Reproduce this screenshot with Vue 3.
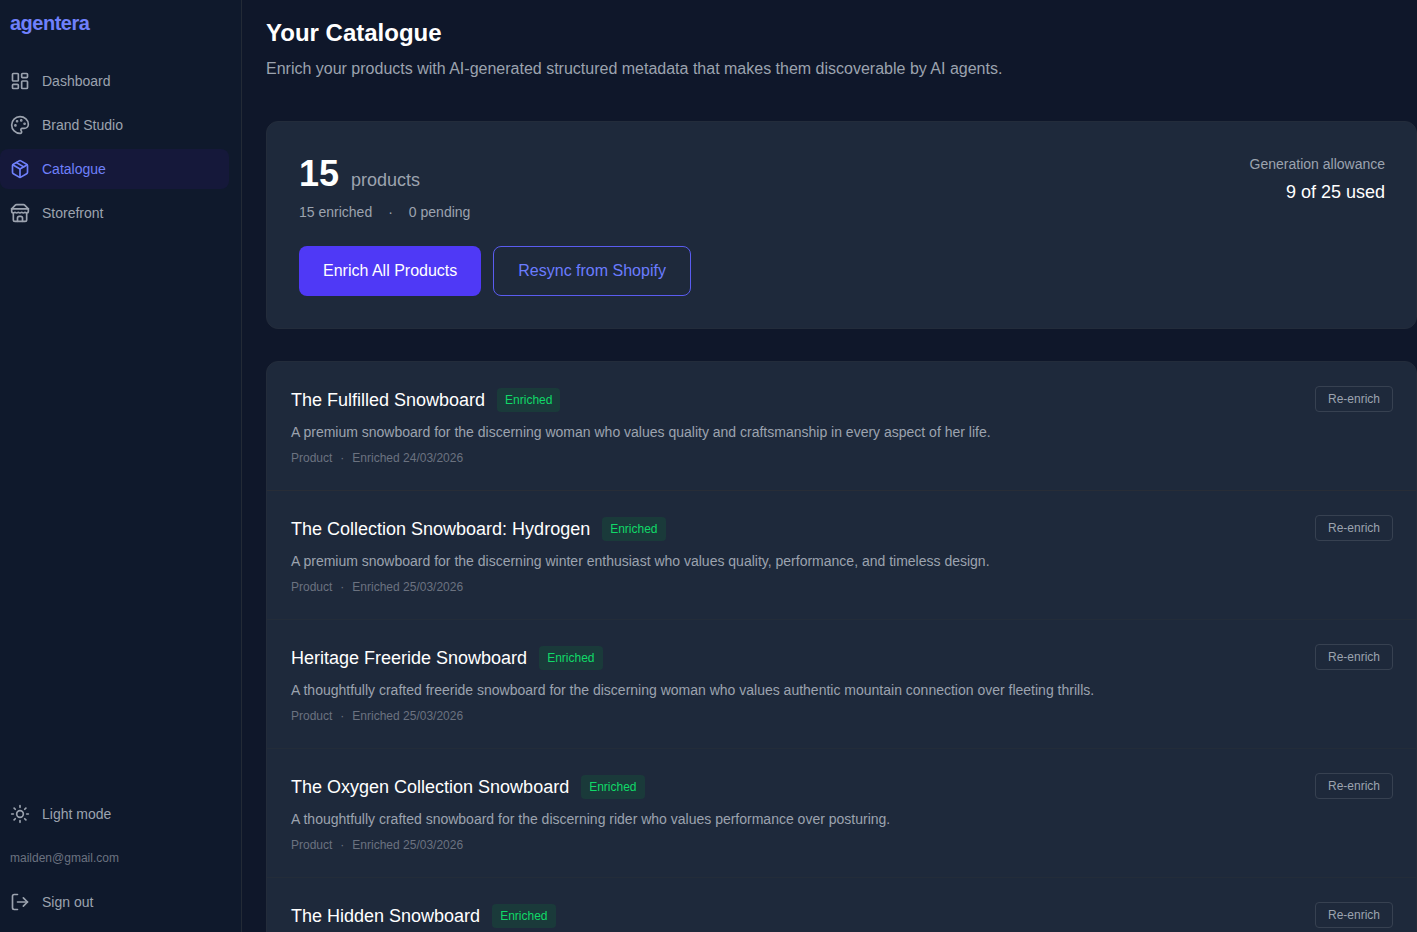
<template>
  <div class="app">
    <aside class="sidebar">
      <div class="logo">agentera</div>
      <nav class="nav">
        <a v-for="item in navItems" :key="item.label" class="nav-item" :class="{ 'nav-item--active': item.active }">
          <svg class="nav-icon" viewBox="0 0 24 24" v-html="item.icon" />
          <span>{{ item.label }}</span>
        </a>
      </nav>
      <div class="sidebar-foot">
        <a class="nav-item">
          <svg class="nav-icon" viewBox="0 0 24 24" v-html="sunIcon" />
          <span>Light mode</span>
        </a>
        <div class="email">mailden@gmail.com</div>
        <a class="nav-item">
          <svg class="nav-icon" viewBox="0 0 24 24" v-html="signOutIcon" />
          <span>Sign out</span>
        </a>
      </div>
    </aside>

    <main class="main">
      <h1 class="page-title">Your Catalogue</h1>
      <p class="page-sub">Enrich your products with AI-generated structured metadata that makes them discoverable by AI agents.</p>

      <section class="summary">
        <div class="summary-left">
          <div class="count-row">
            <span class="count">15</span>
            <span class="count-label">products</span>
          </div>
          <div class="count-meta">
            <span>15 enriched</span>
            <span class="count-dot">·</span>
            <span>0 pending</span>
          </div>
          <div class="actions">
            <button class="btn btn--primary">Enrich All Products</button>
            <button class="btn btn--outline">Resync from Shopify</button>
          </div>
        </div>
        <div class="allowance">
          <div class="allowance-label">Generation allowance</div>
          <div class="allowance-val">9 of 25 used</div>
        </div>
      </section>

      <section class="products">
        <article v-for="p in products" :key="p.name" class="product">
          <div class="product-body">
            <div class="product-head">
              <h3 class="product-name">{{ p.name }}</h3>
              <span class="badge">Enriched</span>
            </div>
            <p class="product-desc">{{ p.desc }}</p>
            <div class="product-meta">
              <span>Product</span>
              <span>·</span>
              <span>Enriched {{ p.date }}</span>
            </div>
          </div>
          <button class="re-btn">Re-enrich</button>
        </article>
      </section>
    </main>
  </div>
</template>

<script setup>
const navItems = [
  {
    label: 'Dashboard',
    icon: '<rect x="3" y="3" width="7" height="9" rx="1"/><rect x="14" y="3" width="7" height="5" rx="1"/><rect x="14" y="12" width="7" height="9" rx="1"/><rect x="3" y="16" width="7" height="5" rx="1"/>',
  },
  {
    label: 'Brand Studio',
    icon: '<path d="M12 22a1 1 0 0 1 0-20 10 9 0 0 1 10 9 5 5 0 0 1-5 5h-2.25a1.75 1.75 0 0 0-1.4 2.8l.3.4a1.75 1.75 0 0 1-1.4 2.8z"/><circle cx="13.5" cy="6.5" r=".6" fill="currentColor"/><circle cx="17.5" cy="10.5" r=".6" fill="currentColor"/><circle cx="6.5" cy="12.5" r=".6" fill="currentColor"/><circle cx="8.5" cy="7.5" r=".6" fill="currentColor"/>',
  },
  {
    label: 'Catalogue',
    active: true,
    icon: '<path d="M11 21.73a2 2 0 0 0 2 0l7-4A2 2 0 0 0 21 16V8a2 2 0 0 0-1-1.73l-7-4a2 2 0 0 0-2 0l-7 4A2 2 0 0 0 3 8v8a2 2 0 0 0 1 1.73z"/><path d="M12 22V12"/><path d="M3.29 7 12 12l8.71-5"/><path d="m7.5 4.27 9 5.15"/>',
  },
  {
    label: 'Storefront',
    icon: '<path d="m2 7 4.41-4.41A2 2 0 0 1 7.83 2h8.34a2 2 0 0 1 1.42.59L22 7"/><path d="M4 12v8a2 2 0 0 0 2 2h12a2 2 0 0 0 2-2v-8"/><path d="M15 22v-4a2 2 0 0 0-2-2h-2a2 2 0 0 0-2 2v4"/><path d="M2 7h20"/><path d="M22 7v3a2 2 0 0 1-2 2a2.7 2.7 0 0 1-1.59-.63.7.7 0 0 0-.82 0A2.7 2.7 0 0 1 16 12a2.7 2.7 0 0 1-1.59-.63.7.7 0 0 0-.82 0A2.7 2.7 0 0 1 12 12a2.7 2.7 0 0 1-1.59-.63.7.7 0 0 0-.82 0A2.7 2.7 0 0 1 8 12a2.7 2.7 0 0 1-1.59-.63.7.7 0 0 0-.82 0A2.7 2.7 0 0 1 4 12a2 2 0 0 1-2-2V7"/>',
  },
]

const sunIcon = '<circle cx="12" cy="12" r="4"/><path d="M12 2v2"/><path d="M12 20v2"/><path d="m4.93 4.93 1.41 1.41"/><path d="m17.66 17.66 1.41 1.41"/><path d="M2 12h2"/><path d="M20 12h2"/><path d="m6.34 17.66-1.41 1.41"/><path d="m19.07 4.93-1.41 1.41"/>'
const signOutIcon = '<path d="M9 21H5a2 2 0 0 1-2-2V5a2 2 0 0 1 2-2h4"/><path d="m16 17 5-5-5-5"/><path d="M21 12H9"/>'

const products = [
  { name: 'The Fulfilled Snowboard', desc: 'A premium snowboard for the discerning woman who values quality and craftsmanship in every aspect of her life.', date: '24/03/2026' },
  { name: 'The Collection Snowboard: Hydrogen', desc: 'A premium snowboard for the discerning winter enthusiast who values quality, performance, and timeless design.', date: '25/03/2026' },
  { name: 'Heritage Freeride Snowboard', desc: 'A thoughtfully crafted freeride snowboard for the discerning woman who values authentic mountain connection over fleeting thrills.', date: '25/03/2026' },
  { name: 'The Oxygen Collection Snowboard', desc: 'A thoughtfully crafted snowboard for the discerning rider who values performance over posturing.', date: '25/03/2026' },
  { name: 'The Hidden Snowboard', desc: 'A premium snowboard for the discerning rider who values quality and timeless design.', date: '25/03/2026' },
]
</script>

<style>
html, body {
  margin: 0;
  height: 100%;
  overflow: hidden;
  background: #0f172a;
}
</style>

<style scoped>
.app {
  display: flex;
  height: 932px;
  overflow: hidden;
  font-family: "Liberation Sans", Arial, sans-serif;
  background: #0f172a;
}

.sidebar {
  width: 241px;
  flex-shrink: 0;
  border-right: 1px solid #232a36;
  display: flex;
  flex-direction: column;
  background: #0f192c;
}

.logo {
  font-size: 20px;
  font-weight: 700;
  color: #6f80fb;
  letter-spacing: -0.5px;
  padding: 12px 10px 0;
  line-height: 23px;
}

.nav {
  margin-top: 26px;
  display: flex;
  flex-direction: column;
  gap: 4px;
}

.nav-item {
  display: flex;
  align-items: center;
  gap: 12px;
  height: 40px;
  width: 229px;
  padding-left: 10px;
  box-sizing: border-box;
  border-radius: 8px;
  font-size: 14px;
  color: #9ca3af;
}

.nav-item--active {
  background: #15183a;
  color: #6f80fb;
}

.nav-icon {
  width: 20px;
  height: 20px;
  flex-shrink: 0;
  fill: none;
  stroke: currentColor;
  stroke-width: 2;
  stroke-linecap: round;
  stroke-linejoin: round;
}

.sidebar-foot {
  margin-top: auto;
  display: flex;
  flex-direction: column;
  padding-bottom: 10px;
}

.email {
  font-size: 12px;
  color: #6b7280;
  padding: 17px 10px;
  line-height: 14px;
}

.main {
  flex: 1;
  min-width: 0;
  padding: 19px 0 0 24px;
  background: #0f172a;
}

.page-title {
  margin: 0;
  font-size: 24px;
  font-weight: 700;
  line-height: 27px;
  color: #fff;
}

.page-sub {
  margin: 14px 0 0;
  font-size: 16px;
  line-height: 18px;
  color: #9ca3af;
}

.summary {
  margin-top: 43px;
  height: 208px;
  box-sizing: border-box;
  padding: 31px 31px 31px 32px;
  border: 1px solid #232c3b;
  border-radius: 12px;
  background: #1e293b;
  display: flex;
  justify-content: space-between;
  align-items: flex-start;
}

.count-row {
  display: flex;
  align-items: baseline;
  gap: 12px;
}

.count {
  font-size: 36px;
  font-weight: 700;
  line-height: 41px;
  color: #fff;
}

.count-label {
  font-size: 18px;
  color: #9ca3af;
}

.count-meta {
  margin-top: 10px;
  display: flex;
  gap: 16px;
  font-size: 14px;
  line-height: 16px;
  color: #9ca3af;
}

.actions {
  margin-top: 26px;
  display: flex;
  gap: 12px;
}

.btn {
  height: 50px;
  padding: 0 24px;
  border-radius: 8px;
  font-family: inherit;
  font-size: 16px;
  box-sizing: border-box;
}

.btn--primary {
  background: #4f39f6;
  border: 0;
  color: #fff;
}

.btn--outline {
  background: transparent;
  border: 1px solid #5a5cf0;
  color: #6b7cff;
}

.allowance {
  text-align: right;
}

.allowance-label {
  font-size: 14px;
  line-height: 16px;
  color: #9ca3af;
  margin-top: 3px;
}

.allowance-val {
  margin-top: 10px;
  font-size: 18px;
  line-height: 20px;
  color: #fff;
}

.products {
  margin-top: 32px;
  border: 1px solid #232c3b;
  background: #1e293b;
  border-radius: 12px 12px 0 0;
}

.product {
  height: 129px;
  box-sizing: border-box;
  padding: 24px 23px 24px 24px;
  display: flex;
  justify-content: space-between;
  align-items: flex-start;
  border-bottom: 1px solid #232c39;
}

.product:first-child {
  border-bottom-color: #282d37;
}

.product-head {
  display: flex;
  align-items: center;
  gap: 12px;
  height: 28px;
}

.product-name {
  margin: 0;
  font-size: 18px;
  font-weight: 400;
  color: #fff;
}

.badge {
  font-size: 12px;
  color: #10d968;
  background: #1a3a3a;
  padding: 0 8px;
  line-height: 24px;
  border-radius: 4px;
}

.product-desc {
  margin: 10px 0 0;
  font-size: 14px;
  line-height: 16px;
  color: #9ca3af;
}

.product-meta {
  margin-top: 11px;
  display: flex;
  gap: 8px;
  font-size: 12px;
  line-height: 14px;
  color: #6b7280;
}

.re-btn {
  height: 26px;
  padding: 0 12px;
  background: transparent;
  border: 1px solid #374151;
  border-radius: 4px;
  font-family: inherit;
  font-size: 12px;
  color: #9ca3af;
}
</style>
